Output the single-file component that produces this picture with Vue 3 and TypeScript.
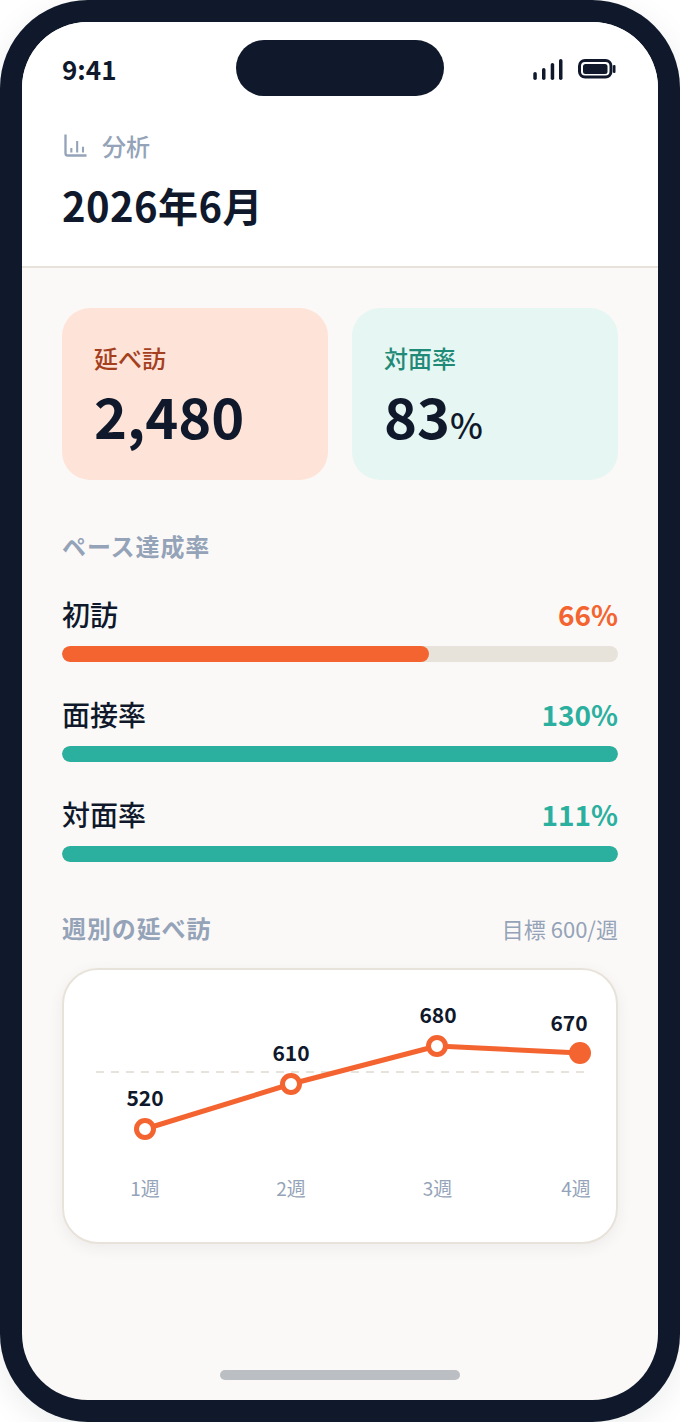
<script setup lang="ts">
interface Rate {
  label: string
  value: number
  tone: 'orange' | 'teal'
}

const rates: Rate[] = [
  { label: '初訪', value: 66, tone: 'orange' },
  { label: '面接率', value: 130, tone: 'teal' },
  { label: '対面率', value: 111, tone: 'teal' },
]

const weeks = [
  { x: 81, y: 159, value: 520, vx: 81, vy: 136, label: '1週', lx: 81, last: false },
  { x: 227, y: 114, value: 610, vx: 227, vy: 91, label: '2週', lx: 227, last: false },
  { x: 373, y: 76, value: 680, vx: 374, vy: 53, label: '3週', lx: 373.5, last: false },
  { x: 516, y: 83, value: 670, vx: 505, vy: 61, label: '4週', lx: 512, last: true },
]

const linePoints = weeks.map((w) => `${w.x},${w.y}`).join(' ')
</script>

<template>
  <div class="phone">
    <div class="screen">
      <div class="notch" />
      <header class="top">
        <div class="status">
          <span class="time">9:41</span>
          <div class="status-icons">
            <svg width="30" height="21" viewBox="0 0 30 21">
              <rect x="0.3" y="13" width="3.5" height="8" rx="1.75" />
              <rect x="9" y="9" width="3.5" height="12" rx="1.75" />
              <rect x="17.7" y="4" width="3.5" height="17" rx="1.75" />
              <rect x="26" y="0" width="3.5" height="21" rx="1.75" />
            </svg>
            <svg width="38" height="20" viewBox="0 0 38 20">
              <rect x="1.5" y="1.5" width="31.5" height="16.5" rx="5.5" class="batt-line" />
              <rect x="5" y="5" width="24.5" height="10" rx="2.5" />
              <rect x="35" y="6" width="2.5" height="8" rx="1" />
            </svg>
          </div>
        </div>
        <div class="crumb">
          <svg width="28" height="28" viewBox="0 0 24 24" class="crumb-icon">
            <path d="M3 3v16a2 2 0 0 0 2 2h16" />
            <path class="bars" d="M8 18.5v-4M13 18.5V8.5M18 18.5V13.5" />
          </svg>
          <span>分析</span>
        </div>
        <h1 class="title">2026年6月</h1>
      </header>

      <main class="body">
        <div class="stats">
          <div class="stat stat--orange">
            <div class="stat-label">延べ訪</div>
            <div class="stat-value">2,480</div>
          </div>
          <div class="stat stat--teal">
            <div class="stat-label">対面率</div>
            <div class="stat-value">83<small>%</small></div>
          </div>
        </div>

        <h2 class="section-title">ペース達成率</h2>
        <div class="rates">
          <div v-for="r in rates" :key="r.label" class="rate">
            <div class="rate-head">
              <span class="rate-label">{{ r.label }}</span>
              <span class="rate-value" :class="`is-${r.tone}`">{{ r.value }}%</span>
            </div>
            <div class="track">
              <div class="fill" :class="`bg-${r.tone}`" :style="{ width: Math.min(r.value, 100) + '%' }" />
            </div>
          </div>
        </div>

        <div class="chart-head">
          <h2 class="section-title section-title--flat">週別の延べ訪</h2>
          <span class="goal">目標 600/週</span>
        </div>
        <div class="chart-card">
          <svg class="chart" width="552" height="272" viewBox="0 0 552 272">
            <line x1="32" y1="102" x2="520" y2="102" class="goal-line" />
            <polyline :points="linePoints" class="trend" />
            <g v-for="w in weeks" :key="w.label">
              <circle :cx="w.x" :cy="w.y" :r="w.last ? 11 : 8.5" :class="w.last ? 'dot-last' : 'dot'" />
              <text :x="w.vx" :y="w.vy" text-anchor="middle" class="val">{{ w.value }}</text>
              <text :x="w.lx" y="226" text-anchor="middle" class="wk">{{ w.label }}</text>
            </g>
          </svg>
        </div>
      </main>
      <div class="home-bar" />
    </div>
  </div>
</template>

<style>
html,
body {
  margin: 0;
  background: #fff;
}
</style>

<style scoped>
.phone {
  width: 680px;
  height: 1422px;
  box-sizing: border-box;
  padding: 22px;
  background: #0f192b;
  border-radius: 88px;
  box-shadow: 0 8px 32px rgba(15, 25, 43, 0.08);
  font-family: 'Noto Sans CJK JP', 'Noto Sans', sans-serif;
  color: #0f192b;
}

.screen {
  position: relative;
  height: 100%;
  overflow: hidden;
  display: flex;
  flex-direction: column;
  background: #fbf9f7;
  border-radius: 66px;
}

.notch {
  position: absolute;
  top: 18px;
  left: 214px;
  width: 208px;
  height: 56px;
  background: #0f192b;
  border-radius: 28px;
}

.top {
  height: 246px;
  flex: none;
  box-sizing: border-box;
  padding: 0 40px;
  background: #fff;
  border-bottom: 2px solid #e8e3da;
}

.status {
  height: 96px;
  padding-bottom: 2px;
  box-sizing: border-box;
  display: flex;
  align-items: center;
  justify-content: space-between;
}

.time {
  font-size: 26px;
  font-weight: 700;
  line-height: 1;
}

.status-icons {
  display: flex;
  align-items: center;
  gap: 15px;
  margin-right: 2px;
  fill: #0f192b;
}

.batt-line {
  fill: none;
  stroke: #0f192b;
  stroke-width: 3;
}

.crumb {
  display: flex;
  align-items: center;
  gap: 12px;
  margin-top: 10px;
  height: 36px;
  font-size: 24px;
  font-weight: 500;
  line-height: 36px;
  color: #94a3b8;
}

.crumb-icon {
  margin-top: -3px;
  fill: none;
  stroke: #94a3b8;
  stroke-width: 2;
}

.crumb-icon .bars {
  stroke-width: 1.8;
}

.title {
  margin: 12px 0 0;
  font-size: 40px;
  font-weight: 700;
  line-height: 58px;
  letter-spacing: 0.4px;
}

.body {
  flex: 1;
  padding: 40px 40px 0;
}

.stats {
  display: grid;
  grid-template-columns: 1fr 1fr;
  gap: 24px;
}

.stat {
  height: 172px;
  box-sizing: border-box;
  padding: 32px 32px 0;
  border-radius: 28px;
}

.stat--orange {
  background: #fee4d8;
}

.stat--teal {
  background: #e6f6f2;
}

.stat-label {
  font-size: 24px;
  font-weight: 500;
  line-height: 36px;
}

.stat--orange .stat-label {
  color: #a5401f;
}

.stat--teal .stat-label {
  color: #1f8a78;
}

.stat-value {
  margin-top: 1px;
  font-size: 56px;
  font-weight: 700;
  line-height: 76px;
}

.stat-value small {
  font-size: 35px;
  font-weight: 500;
}

.section-title {
  margin: 48px 0 0;
  font-size: 24px;
  font-weight: 700;
  line-height: 36px;
  letter-spacing: 0.9px;
  color: #94a3b8;
}

.section-title--flat {
  margin: 0;
}

.rates {
  margin-top: 30px;
  display: flex;
  flex-direction: column;
  gap: 32px;
}

.rate-head {
  display: flex;
  align-items: center;
  justify-content: space-between;
  height: 40px;
  line-height: 40px;
  font-size: 28px;
}

.rate-label {
  font-weight: 500;
}

.rate-value {
  font-weight: 600;
}

.is-orange {
  color: #f46430;
}

.is-teal {
  color: #2bb09f;
}

.track {
  margin-top: 12px;
  height: 16px;
  overflow: hidden;
  background: #e8e3da;
  border-radius: 8px;
}

.fill {
  height: 100%;
  border-radius: 8px;
}

.bg-orange {
  background: #f46430;
}

.bg-teal {
  background: #2bb09f;
}

.chart-head {
  margin-top: 48px;
  display: flex;
  align-items: center;
  justify-content: space-between;
}

.goal {
  font-size: 22px;
  line-height: 36px;
  color: #94a3b8;
}

.chart-card {
  margin-top: 22px;
  height: 276px;
  box-sizing: border-box;
  background: #fff;
  border: 2px solid #e8e3da;
  border-radius: 36px;
  box-shadow: 0 4px 16px rgba(15, 25, 43, 0.06);
}

.chart {
  display: block;
}

.goal-line {
  stroke: #e8e3da;
  stroke-width: 2;
  stroke-dasharray: 8 7;
}

.trend {
  fill: none;
  stroke: #f46430;
  stroke-width: 5;
  stroke-linejoin: round;
}

.dot {
  fill: #fff;
  stroke: #f46430;
  stroke-width: 5;
}

.dot-last {
  fill: #f46430;
}

.val {
  font-size: 21px;
  font-weight: 600;
  fill: #0f192b;
}

.wk {
  font-size: 19px;
  fill: #94a3b8;
}

.home-bar {
  position: absolute;
  left: 198px;
  bottom: 20px;
  width: 240px;
  height: 10px;
  background: #bbbec2;
  border-radius: 5px;
}
</style>
